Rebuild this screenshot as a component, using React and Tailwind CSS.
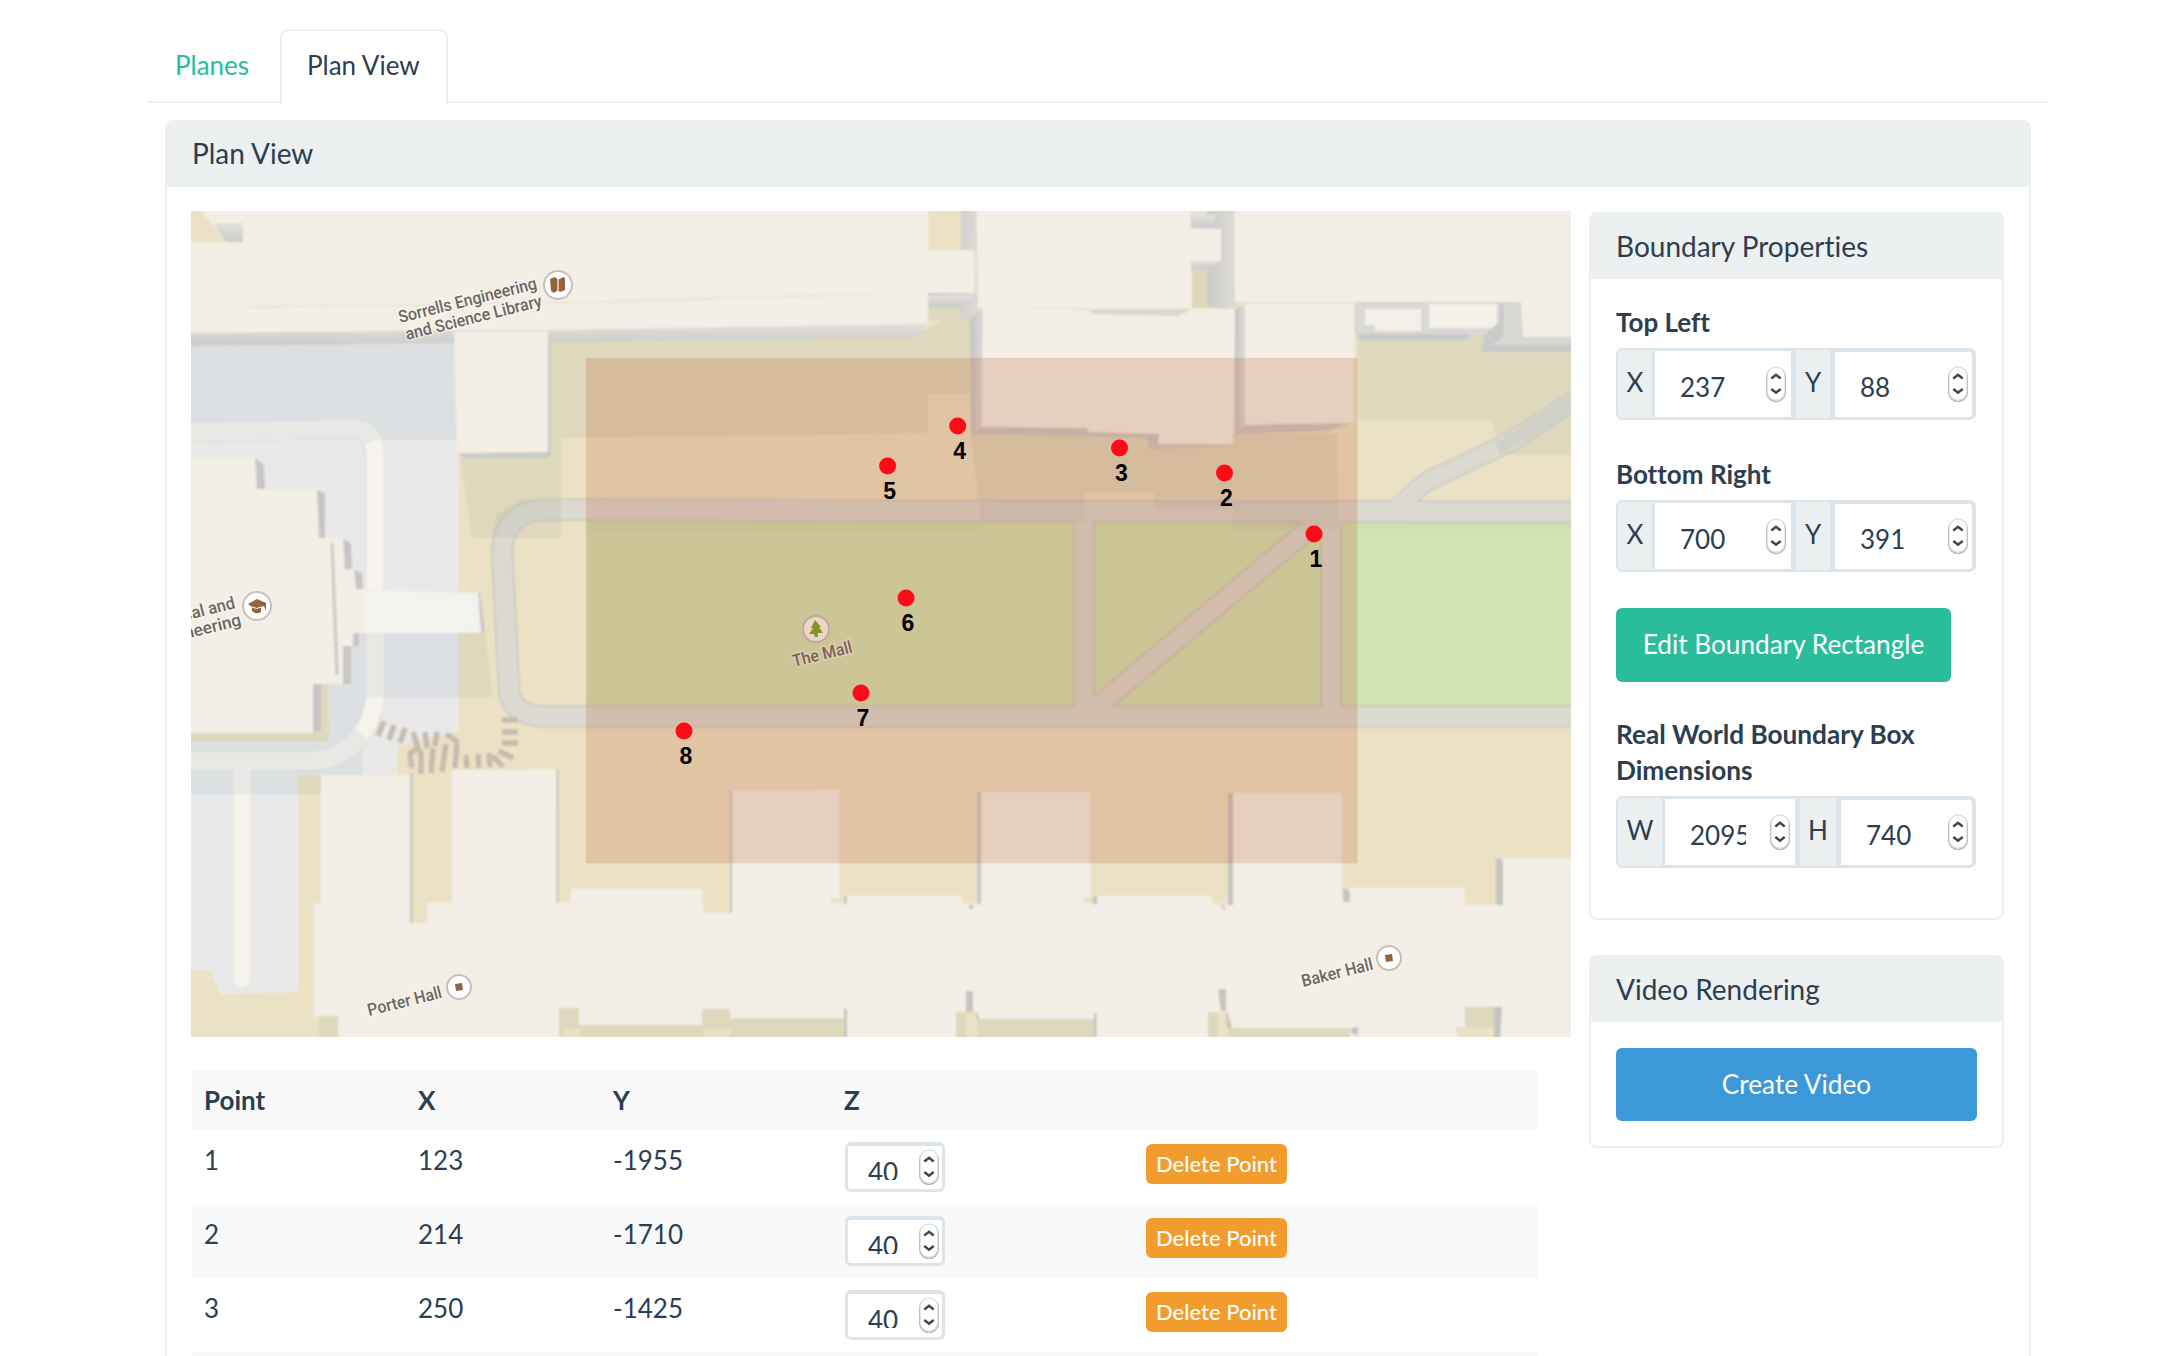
import React from "react";

const points = [
  { id: 1, x: 1314, y: 534 },
  { id: 2, x: 1224.5, y: 473 },
  { id: 3, x: 1119.5, y: 448 },
  { id: 4, x: 957.7, y: 426 },
  { id: 5, x: 887.6, y: 466 },
  { id: 6, x: 906, y: 598 },
  { id: 7, x: 861, y: 693 },
  { id: 8, x: 684, y: 731 },
];

const rows = [
  { id: 1, x: "123", y: "-1955", z: "40" },
  { id: 2, x: "214", y: "-1710", z: "40" },
  { id: 3, x: "250", y: "-1425", z: "40" },
  { id: 4, x: "296", y: "-1010", z: "40" },
];

function Label({ x, y, len, end, children }) {
  return (
    <text
      transform={`translate(${x} ${y}) rotate(-14)`}
      fontSize="17"
      fontWeight="500"
      textLength={len}
      textAnchor={end ? "end" : "start"}
      lengthAdjust="spacingAndGlyphs"
      fill="#6b6764"
      stroke="#fbf8f0"
      strokeWidth="3"
      strokeOpacity="0.6"
      paintOrder="stroke"
      fontFamily="Roboto, sans-serif"
    >
      {children}
    </text>
  );
}

function Poi({ x, y, r = 13, fill = "#fff", children }) {
  return (
    <g transform={`translate(${x} ${y})`}>
      <circle r={r} fill={fill} stroke="#c4c1bb" strokeWidth="2" />
      {children}
    </g>
  );
}

/* Campus map, drawn in page units */
function CampusMap() {
  const cream = "#f3efe6";
  const tan = "#ebe2c5";
  const olive = "#ded8bd";
  const road = "#dbd9d0";
  const roadEdge = "#c9c7bf";
  return (
    <svg viewBox="191 211 1380 826" className="block h-[826px] w-[1380px]">
      <defs>
        <linearGradient id="band" x1="0" y1="0" x2="0" y2="1">
          <stop offset="0" stopColor="#e4e1da" />
          <stop offset="1" stopColor="#c9cbcc" />
        </linearGradient>
        <linearGradient id="side" x1="0" y1="0" x2="1" y2="0">
          <stop offset="0" stopColor="#c4c4c4" />
          <stop offset="1" stopColor="#dfdcd7" />
        </linearGradient>
        <filter id="soft" filterUnits="userSpaceOnUse" x="171" y="191" width="1420" height="866">
          <feGaussianBlur stdDeviation="0.8" />
        </filter>
      </defs>
      <rect x="191" y="211" width="1380" height="826" fill={tan} />

      <g filter="url(#soft)">
        <rect x="171" y="191" width="1420" height="866" fill={tan} />

        {/* parking area */}
        <path d="M171 343H458V731L397 746V775L298 776V992L221 994L210 970H171Z" fill="#e9e9ea" />
        <path d="M171 343H458V440H171Z" fill="#dce0e2" />
        <path d="M330 684L345 633H458V697H380L362 740V775H320V776H298V794H171V743H329Z" fill="#dce0e2" />
        <path d="M298 776H321V794H298Z" fill={olive} />

        {/* lawn shading */}
        <path d="M549 340L928 330L961 307L970 320V394H928V433L561 438V538H472L460 455H549Z" fill={olive} />
        <path d="M458 633H485L493 697H458Z" fill={olive} />
        <path d="M928 300H985V320H928Z" fill={olive} />
        <path d="M1358 330H1591V455H1502L1491 420H1358Z" fill={olive} />
        <path d="M971 434H1337L1338 529H1232L1230 502H1154V493H1085V522H981Z" fill={olive} />

        {/* service roads */}
        <g fill="none" strokeLinejoin="round">
          <path d="M171 433L352 429Q374 429 375 455V697Q372 728 350 746Q335 760 310 761H171" stroke="#d9dad8" strokeWidth="20" />
          <path d="M242 765V980" stroke="#dfdeda" strokeWidth="19" strokeLinecap="round" />
          <path d="M171 433L352 429Q374 429 375 455V697Q372 728 350 746Q335 760 310 761H171" stroke="#f5f3ec" strokeWidth="18" />
          <path d="M242 765V980" stroke="#f6f4ed" strokeWidth="17" strokeLinecap="round" />
          <path d="M171 433L352 429Q368 429 373 441" stroke="#e8e9e5" strokeWidth="18" />
          <path d="M375 633V697" stroke="#e8e9e5" strokeWidth="18" />
          <path d="M362 735Q354 744 345 750Q330 761 310 761H171" stroke="#e8e9e5" strokeWidth="18" />
          <path d="M242 768V794" stroke="#e8e9e5" strokeWidth="17" />
        </g>

        {/* mall */}
        <path d="M586 521H1591V706H586Z" fill="#d2e3b4" />
        <g fill="none" stroke={roadEdge} strokeWidth="22.500">
          <path d="M1591 512L880 511L545 509.500Q505 512 502 550L509 690Q512 716 545 716.500H1591" />
          <path d="M1084 512V716M1331 512V716M1323 517L1093 710" strokeWidth="21.500" />
          <path d="M1590 391L1510 442L1430 480Q1418 487 1400 506" strokeWidth="20.500" />
        </g>
        <g fill="none" stroke={road} strokeWidth="19.500">
          <path d="M1591 512L880 511L545 509.500Q505 512 502 550L509 690Q512 716 545 716.500H1591" />
          <path d="M1084 512V716M1331 512V716M1323 517L1093 710" strokeWidth="18" />
          <path d="M1590 391L1510 442L1430 480Q1418 487 1396 509" strokeWidth="17.500" />
        </g>
        <g fill="#8f9a96" fillOpacity="0.13">
          <path d="M981 501H1085V522H981ZM1154 501H1338V529H1232V510H1154Z" />
          <path d="M493 538L496 515L520 500H561V520L530 521L513 538Z" />
          <path d="M1500 440L1571 394V414L1500 455L1495 440Z" />
          <path d="M586 521H981V531H586ZM1359 521H1591V529H1359Z" fillOpacity="0.05" />
        </g>

        {/* steps */}
        <path
          d="M384 721L378 736M394 725L389 740M405 728L400 743M413 732L418 748L408 755M425 732L427 748M437 732L435 746M446 734L458 742M410 756L412 768M421 750V774M433 748L431 773M446 744L442 772M457 743L455 768M466 755L467 768M478 754L479 768M489 753L490 767M493 756L503 767M499 751L513 758M502 743H518M502 732H518M502 720H518"
          fill="none"
          stroke="#c6bbae"
          strokeWidth="5.500"
        />

        {/* library */}
        <path d="M171 330L928 322L917 338L171 346Z" fill="url(#band)" />
        <path d="M171 191H928V324L550 330L171 333Z" fill={cream} />
        <path d="M171 191H191L202 211L226 242H171Z" fill={tan} />
        <path d="M213 223H243V242H226Z" fill="url(#band)" />
        <path d="M246 307L560 303L870 294" fill="none" stroke="#e6e2d8" strokeWidth="1.500" />
        <path d="M458 450H549V458H464Z" fill="#c9ccc9" />
        <path d="M454 332L548 331V452L457 453Z" fill={cream} />
        <path d="M549 342V456" stroke="#c6c6bf" strokeWidth="2" />

        {/* hall west */}
        <path d="M171 733H313V684H329V742H171Z" fill={olive} />
        <g fill="#c9c5c5">
          <path d="M255 458L264 465L265 489H255ZM317 490L325 493V538H317ZM343 539L351 543L352 569H344ZM354 570L362 573L363 589H355Z" />
          <path d="M352 633H359V646H352ZM343 646H351V684H343ZM312 684H321V731H312Z" />
          <path d="M478 593L480 593L485 632H480Z" />
        </g>
        <path d="M171 458H255L257 489H317L319 538H343L345 570H354L356 589L478 593L481 633H353V646H343V684H313V732L171 733Z" fill={cream} />
        <path d="M363 591L478 593L481 633H363Z" fill="#f2f2ee" />
        <path d="M332 543L337 675" stroke="#cfcbca" strokeWidth="3.500" />

        {/* centre hall */}
        <path d="M928 293H976V250H961V191H980L985 307L970 320H961V307H928Z" fill="url(#side)" />
        <path d="M928 295H974L962 307H928Z" fill="url(#band)" />
        <path d="M926 250H974V293H926Z" fill={cream} />
        <path d="M976 191H1190L1192 308H978Z" fill={cream} />
        <path d="M1192 264H1210V308H1192Z" fill={olive} />
        <path d="M1191 191H1236L1238 307L1222 309L1207 307V268H1192Z" fill="url(#side)" />
        <path d="M1191 215H1215V228H1191Z" fill="url(#band)" />
        <path d="M1191 191H1230L1205 215H1191Z" fill="#e6e3dd" />
        <path d="M1191 261H1221L1209 269H1191Z" fill="url(#band)" />
        <path d="M1190 228L1221 229V261H1190Z" fill={cream} />
        <path d="M970 320L984 307L982 427L971 434Z" fill="url(#side)" />
        <path d="M971 434L983 426L1160 430L1148 438Z" fill="#cbc8c5" />
        <path d="M1147 437L1160 430V445H1233L1220 447L1149 449Z" fill="#cbc8c5" />
        <path d="M983 307L1235 309L1233 444H1158L1159 434L1088 432V428L982 427Z" fill={cream} />
        <path d="M984 306L1091 309H1192L1178 316L1092 314L1090 310Z" fill="#d9d7d2" />

        {/* east hall */}
        <path d="M1234 191H1591V338H1521V302H1235Z" fill={cream} />
        <path d="M1235 310L1245 303V425L1235 434Z" fill="url(#side)" />
        <path d="M1235 434L1245 424L1354 422L1328 431Z" fill="#cbc8c5" />
        <path d="M1245 304H1354V423L1245 425Z" fill={cream} />
        <path d="M1354 302H1521L1523 337H1591V351L1482 352V333L1466 339H1358L1354 330Z" fill="#d9d8d5" />
        <path d="M1358 334H1471L1466 340H1360ZM1482 345H1591V352H1482Z" fill="#c8cac9" />
        <path d="M1365 309H1421V331H1376L1374 325H1365ZM1429 304H1497V328H1429Z" fill="#f4f1e9" />
        <path d="M1484 335L1499 322V304H1504V336L1484 351Z" fill="#cacaca" />

        {/* south halls */}
        <path d="M321 776L410 775L412 923H427V903H452V770L556 769L558 903H571V889H702L703 913H731V791L839 790V900H845V896H961L963 904H979V792H1090V900L1095 896H1211L1213 904H1233V793H1342V900L1348 888H1464L1465 905H1503V858H1591V1057H338V1016H314V904H321Z" fill={cream} />
        <g fill={olive}>
          <path d="M319 1016H338V1057H319ZM559 1008H579V1025H702V1009H730V1018H845V1057H559Z" />
          <path d="M956 1012H978V1019H1095V1057H956ZM1208 1012H1228L1232 1028H1350V1057H1208ZM1465 1007H1495V1057H1465Z" />
        </g>
        <g fill={tan}>
          <path d="M563 1029H581V1057H563ZM704 1029H730V1057H704ZM966 1012H976L980 1057H966ZM1218 1012H1226L1232 1057H1218ZM1455 1027H1495V1057H1465Z" />
          <path d="M830 898H845V903H832ZM1082 898H1095V903H1084Z" />
        </g>
        <g fill="#c6c4c0">
          <path d="M410 773H412.500V923H410ZM556.500 770H558.500V903H556.500ZM730 791H732V913H730ZM844 896H847V904H844ZM977.500 792H981V904H977.500ZM1093 896H1097V904H1093ZM1228 793H1233V905H1228Z" />
          <path d="M1343 888L1350 891V902H1343ZM1496 858L1503 860V905H1496ZM1494 1007H1502L1499 1057H1494ZM966 991H973V1012H966ZM1218 989H1226V1011H1221ZM976 1012L980 1019H976ZM1226 1011L1232 1028H1227Z" />
          <path d="M1094 1013H1096.500V1057H1094ZM844 1009H847V1057H844ZM1351 1028L1358 1027V1036L1351 1033ZM969 905H973V909H969ZM1220 905H1224L1226 911Z" />
        </g>
      </g>

      {/* places */}
      <Label x={400} y={323} len={142}>Sorrells Engineering</Label>
      <Label x={407} y={340} len={140}>and Science Library</Label>
      <Poi x={558} y={285} r={14}>
        <path d="M-8 -6L-3 -8L0 -5L5 -8L7 -7V5L2 7L0 5L-4 8L-7 6Z" fill="#94643c" />
        <path d="M0 -5V5" stroke="#e9ddd0" strokeWidth="1.500" />
      </Poi>
      <Label x={236} y={608} len={53} end>cal and</Label>
      <Label x={242} y={625} len={58} end>neering</Label>
      <Poi x={257} y={606} r={14}>
        <path d="M-9 -2L0 -7L9 -3L9 5L7 0L4 1V6Q-1 9 -5 5V1Z" fill="#94643c" />
        <path d="M-5 1Q0 4 4 1" fill="none" stroke="#fff" strokeWidth="1" />
      </Poi>
      <Label x={794} y={667} len={61}>The Mall</Label>
      <Poi x={816} y={629} r={13} fill="#fdf8f2">
        <path d="M-1 -9L5 -2H3L7 4H2V8H-1L-2 5L-7 5L-3 -1H-5Z" fill="#79a821" />
      </Poi>
      <Label x={369} y={1016} len={76}>Porter Hall</Label>
      <Poi x={459} y={987} r={12}>
        <path d="M-4 -3L3 -4L4 3L-3 4Z" fill="#94643c" />
      </Poi>
      <Label x={1303} y={987} len={73}>Baker Hall</Label>
      <Poi x={1389} y={958} r={12}>
        <path d="M-4 -3L3 -4L4 3L-3 4Z" fill="#94643c" />
      </Poi>

      {/* boundary and tracked points */}
      <rect x="586" y="358" width="771.500" height="505.300" fill="rgb(182,78,30)" fillOpacity="0.2" />
      {points.map((p) => (
        <g key={p.id}>
          <circle cx={p.x} cy={p.y} r="8.500" fill="#ff0a17" />
          <text
            x={p.x + 2}
            y={p.y + 33}
            textAnchor="middle"
            fontSize="23"
            fontWeight="700"
            fill="#000"
            fontFamily="Liberation Sans, Arial, sans-serif"
          >
            {p.id}
          </text>
        </g>
      ))}
    </svg>
  );
}

function Spinner({ className }) {
  return (
    <svg viewBox="0 0 20 36" className={className}>
      <rect x="0.750" y="1.500" width="18.500" height="34" rx="9.250" fill="#fff" stroke="#b9b9b9" strokeWidth="1.500" />
      <rect x="1.200" y="1" width="17.600" height="33" rx="8.800" fill="#fff" stroke="#dcdcdc" strokeWidth="1" />
      <path d="M5.300 12.500L10 8.700L14.700 12.500M5.300 23L10 26.800L14.700 23" fill="none" stroke="#444" strokeWidth="2.400" />
    </svg>
  );
}

function NumberField({ value, last, clip }) {
  return (
    <div
      className={
        last
          ? "flex min-w-0 flex-1 items-start rounded-r-md border-t-4 border-r-4 border-b-[3px] border-l-[5px] border-[#dce4ec] bg-[#dce4ec]"
          : "flex min-w-0 flex-1 items-start border-y-[3px] border-r-[5px] border-l-[3px] border-[#dce4ec] bg-white"
      }
    >
      <div className={last ? "flex h-[65px] w-full items-start rounded-r-[3px] bg-white pl-[25px] pr-1" : "flex h-[66px] w-full items-start bg-white pl-[25px] pr-[5px]"}>
        <span className={`overflow-hidden leading-[36px] ${last ? "mt-[17px]" : "mt-[18px]"} ${clip ? "w-[56px]" : ""}`}>{value}</span>
        <Spinner className={last ? "ml-auto mt-[14px] h-9 w-5" : "ml-auto mt-[15px] h-9 w-5"} />
      </div>
    </div>
  );
}

function Addon({ first, width, children }) {
  return (
    <div
      className={`${width} shrink-0 border-y-2 border-[#dce4ec] bg-[#ecf0f1] pt-[14px] text-center leading-[36px] ${
        first ? "rounded-l-md border-l-2" : ""
      }`}
    >
      {children}
    </div>
  );
}

function InputPair({ a, b, wa, wb, left, va, vb, clip }) {
  return (
    <div className="flex h-[72px] w-[360px]">
      <div className={`${left} flex shrink-0`}>
        <Addon first width={wa}>{a}</Addon>
        <NumberField value={va} clip={clip} />
      </div>
      <Addon width={wb}>{b}</Addon>
      <NumberField value={vb} last />
    </div>
  );
}

function SidePanel({ title, className, children }) {
  return (
    <section className={`w-[415px] rounded-lg border-2 border-[#ecf0f1] ${className}`}>
      <h3 className="h-[65px] bg-[#ecf0f1] pl-[25px] pt-[12px] text-[28px] leading-[40px]">{title}</h3>
      {children}
    </section>
  );
}

export default function App() {
  return (
    <div className="h-[1356px] w-[2180px] overflow-hidden bg-white pl-[148px] pt-[29px] font-[Lato,sans-serif] text-[26px] text-[#2c3e50] [font-variant-ligatures:none]">
      <nav className="flex h-[74px] w-[1900px] items-stretch">
        <a className="w-[132px] border-b-2 border-[#ecf0f1] pl-[27px] pt-[18px] leading-[36px] text-[#2abd9c]">Planes</a>
        <a className="w-[168px] rounded-t-lg border-x-2 border-t-2 border-[#ecf0f1] pl-[25px] pt-[16px] leading-[36px]">Plan View</a>
        <div className="flex-1 border-b-2 border-[#ecf0f1]" />
      </nav>

      <section className="ml-[17px] mt-[17px] w-[1866px] rounded-t-lg border-2 border-[#ecf0f1]">
        <h3 className="h-[65px] bg-[#ecf0f1] pl-[25px] pt-[11px] text-[28px] leading-[40px]">Plan View</h3>
        <div className="flex items-start pl-6 pt-6">
          <div className="w-[1380px]">
            <CampusMap />
            <table className="ml-px mt-[33px] w-[1346px] table-fixed border-collapse text-left">
              <colgroup>
                <col className="w-[214px]" />
                <col className="w-[195px]" />
                <col className="w-[231px]" />
                <col className="w-[302px]" />
                <col className="w-[404px]" />
              </colgroup>
              <thead>
                <tr className="h-[60px] bg-[#f9f9f9] align-top leading-[36px]">
                  <th className="pl-3 pt-[12px] font-bold">Point</th>
                  <th className="pl-3 pt-[12px] font-bold">X</th>
                  <th className="pl-3 pt-[12px] font-bold">Y</th>
                  <th className="pl-3 pt-[12px] font-bold">Z</th>
                  <th />
                </tr>
              </thead>
              <tbody>
                {rows.map((r) => (
                  <tr key={r.id} className="h-[74px] align-top leading-[36px] even:bg-[#f9f9f9]">
                    <td className="pl-3 pt-[12px]">{r.id}</td>
                    <td className="pl-3 pt-[12px]">{r.x}</td>
                    <td className="pl-3 pt-[12px]">{r.y}</td>
                    <td className="pl-[13px] pt-[12px]">
                      <div className="flex h-[50px] w-[100px] items-start rounded-md border-x-[3px] border-b-[3px] border-t-4 border-[#dce4ec] bg-white pl-5 pr-[3px]">
                        <span className="mt-1 h-[30px] overflow-hidden leading-[44px]">{r.z}</span>
                        <Spinner className="ml-auto mt-[3px] h-9 w-5" />
                      </div>
                    </td>
                    <td className="pl-3 pt-[14px]">
                      <button className="block h-10 w-[141px] rounded-md bg-[#f39c2e] text-[22px] font-medium leading-[38px] text-white">Delete Point</button>
                    </td>
                  </tr>
                ))}
              </tbody>
            </table>
          </div>

          <aside className="ml-[18px] mt-px">
            <SidePanel title="Boundary Properties" className="h-[708px]">
              <div className="pl-[25px] pt-[25px]">
                <h4 className="h-[44px] font-bold leading-[36px]">Top Left</h4>
                <InputPair a="X" b="Y" wa="w-[36px]" wb="w-[34px]" left="w-[180px]" va="237" vb="88" />
                <h4 className="mt-[36px] h-[44px] font-bold leading-[36px]">Bottom Right</h4>
                <InputPair a="X" b="Y" wa="w-[36px]" wb="w-[34px]" left="w-[180px]" va="700" vb="391" />
                <button className="mt-[36px] block h-[74px] w-[335px] rounded-md bg-[#2abd9c] text-[26.2px] text-white">Edit Boundary Rectangle</button>
                <h4 className="mt-[34px] h-[80px] w-[360px] text-[26.2px] font-bold leading-[36px]">Real World Boundary Box Dimensions</h4>
                <InputPair a="W" b="H" wa="w-[46px]" wb="w-[36px]" left="w-[184px]" va="2095" vb="740" clip />
              </div>
            </SidePanel>
            <SidePanel title="Video Rendering" className="mt-[35px] h-[193px]">
              <div className="px-[25px] pt-[26px]">
                <button className="block h-[73px] w-full rounded-md bg-[#3b99d9] text-[26.2px] text-white">Create Video</button>
              </div>
            </SidePanel>
          </aside>
        </div>
      </section>
    </div>
  );
}
